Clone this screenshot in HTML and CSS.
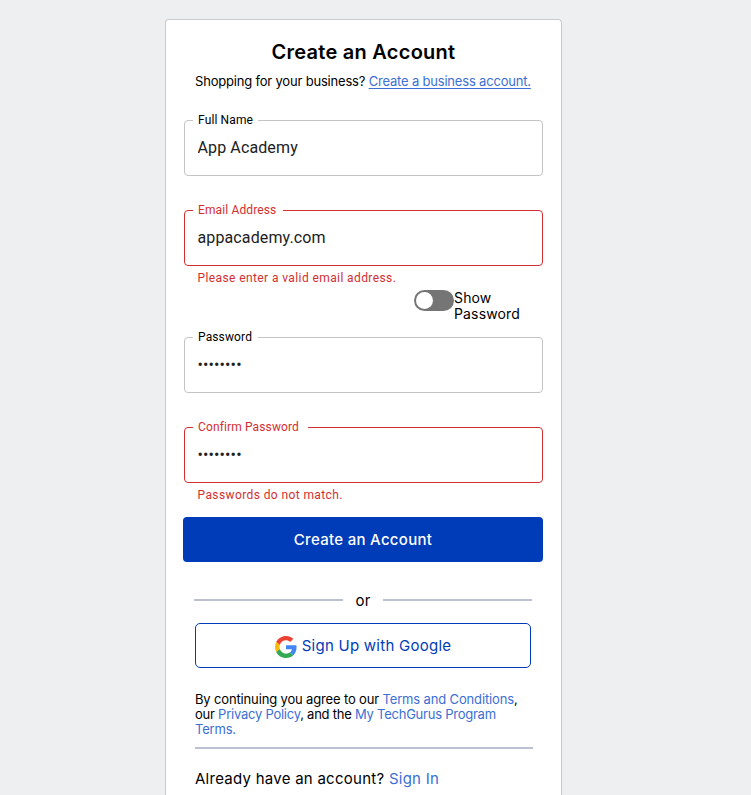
FILE: index.html
```html
<!DOCTYPE html>
<html lang="en">
<head>
<meta charset="utf-8">
<title>Create an Account</title>
<link rel="stylesheet" href="styles.css">
</head>
<body>
<main class="card">
  <h1 class="title"><span>Create an Account</span></h1>
  <p class="business"><span>Shopping for your business?</span> <a class="underlined" href="#">Create a business account.</a></p>
  <form>
    <fieldset class="field name">
      <legend>Full Name</legend>
      <input class="name-input" type="text" value="App Academy" aria-label="Full Name">
    </fieldset>
    <fieldset class="field email invalid">
      <legend>Email Address</legend>
      <input class="email-input" type="text" value="appacademy.com" aria-label="Email Address">
    </fieldset>
    <p class="error">Please enter a valid email address.</p>
    <div class="show-row">
      <span class="toggle"><span class="knob"></span></span>
      <span class="show-label">Show<br>Password</span>
    </div>
    <fieldset class="field password">
      <legend>Password</legend>
      <div class="secret">••••••••</div>
    </fieldset>
    <fieldset class="field confirm invalid">
      <legend>Confirm Password</legend>
      <div class="secret">••••••••</div>
    </fieldset>
    <p class="error">Passwords do not match.</p>
    <button class="submit" type="button">Create an Account</button>
  </form>
  <div class="divider"><span class="or">or</span></div>
  <button class="google" type="button">
    <svg class="logo" viewBox="0 0 48 48" aria-hidden="true">
      <path fill="#ea4335" d="M24 9.5c3.54 0 6.71 1.22 9.21 3.6l6.85-6.85C35.9 2.38 30.47 0 24 0 14.62 0 6.51 5.38 2.56 13.22l7.98 6.19C12.43 13.72 17.74 9.5 24 9.5z"/>
      <path fill="#4285f4" d="M46.98 24.55c0-1.57-.15-3.09-.38-4.55H24v9.02h12.94c-.58 2.96-2.26 5.48-4.78 7.18l7.73 6c4.51-4.18 7.09-10.36 7.09-17.65z"/>
      <path fill="#fbbc05" d="M10.53 28.59A14.5 14.5 0 0 1 9.77 24c0-1.6.27-3.14.76-4.59l-7.98-6.19A24 24 0 0 0 0 24c0 3.88.92 7.54 2.56 10.78z"/>
      <path fill="#34a853" d="M24 48c6.48 0 11.93-2.13 15.89-5.81l-7.73-6c-2.15 1.45-4.92 2.3-8.16 2.3-6.26 0-11.57-4.22-13.47-9.91l-7.98 6.19C6.51 42.62 14.62 48 24 48z"/>
    </svg>
    <span>Sign Up with Google</span>
  </button>
  <p class="terms"><span class="agree">By continuing you agree to our <a href="#">Terms and Conditions</a>,</span><br><span class="policy">our <a href="#">Privacy Policy</a>, and the <a href="#">My TechGurus Program</a></span><br><a href="#">Terms.</a></p>
  <hr class="rule">
  <p class="signin"><span>Already have an account?</span> <a href="#">Sign In</a></p>
</main>
</body>
</html>
```
FILE: styles.css
```css
* { box-sizing: border-box; }
body {
  display: flow-root;
  margin: 0;
  height: 795px;
  background: #eeeff1;
  color: #000;
  font-family: Inter, "Liberation Sans", sans-serif;
}
h1, p { margin: 0; }
a { color: #3b6fd4; text-decoration: none; }
.card {
  width: 397px;
  height: 776px;
  margin: 19px 0 0 165px;
  padding: 20px 18px 0;
  background: #fff;
  border: 1px solid #c8cacc;
  border-bottom: 0;
  border-radius: 4px 4px 0 0;
}
.title {
  text-align: center;
  font-size: 20px;
  line-height: 24px;
  font-weight: 600;
  letter-spacing: 0.25px;
}
.business {
  margin: 9px 0 0 11px;
  font-size: 13px;
  line-height: 16px;
  letter-spacing: -0.19px;
  white-space: nowrap;
}
.underlined { text-decoration: underline; text-underline-offset: 2px; }
.field {
  width: 359px;
  height: 63px;
  min-width: 0;
  margin: 27px 0 0;
  padding: 0 13px 0 8px;
  border: 1px solid #c4c4c4;
  border-radius: 4px;
  font-family: Roboto, sans-serif;
}
.field.name { margin-top: 24px; }
.field legend {
  width: 65px;
  height: 15px;
  padding: 0 0 0 5px;
  font-size: 12px;
  line-height: 14px;
  letter-spacing: 0.13px;
  white-space: nowrap;
}
.field.email legend { width: 90px; }
.field.confirm legend { width: 115px; }
.field.password { margin-top: 8px; }
.field.invalid { border-color: #d32f2f; }
.invalid legend, .error { color: #d32f2f; }
.field input {
  display: block;
  width: 330px;
  height: 24px;
  margin: 8px 0 0 4.5px;
  padding: 0;
  border: 0;
  outline: 0;
  background: none;
  color: #212121;
  font: 16px/24px Roboto, sans-serif;
  letter-spacing: 0.12px;
}
.secret {
  margin: 8px 0 0 4.5px;
  font: 16px/24px Roboto, sans-serif;
  letter-spacing: 0.12px;
  color: #212121;
}
.error {
  margin: 4px 0 0 13.5px;
  font: 12px/16px Roboto, sans-serif;
  letter-spacing: 0.4px;
}
.show-row { display: flex; height: 32px; margin: 4px 0 0 230px; }
.toggle {
  width: 40px;
  height: 21px;
  padding: 2px;
  border-radius: 11px;
  background: #757575;
}
.knob { display: block; width: 17px; height: 17px; border-radius: 50%; background: #fff; }
.show-label { font-size: 14px; line-height: 16px; letter-spacing: 0.15px; }
.submit {
  display: block;
  width: 360px;
  height: 45px;
  margin: 14px 0 0 -1px;
  border: 0;
  border-radius: 4px;
  background: #003cb8;
  color: #fff;
  font: 500 15px Inter, sans-serif;
  letter-spacing: 0.3px;
}
.divider {
  display: flex;
  align-items: center;
  height: 20px;
  margin: 29px 11px 0 10px;
}
.divider::before, .divider::after {
  content: "";
  flex: 1;
  height: 2px;
  background: #bbc1d1;
  margin-bottom: 2px;
}
.or { width: 40px; text-align: center; font-size: 15px; line-height: 20px; letter-spacing: 0.3px; }
.google {
  display: flex;
  align-items: center;
  justify-content: center;
  gap: 5px;
  width: 336px;
  height: 45px;
  margin: 12px 0 0 11px;
  border: 1px solid #003cb8;
  border-radius: 5px;
  background: #fff;
  color: #003cb8;
  font: 15px Inter, sans-serif;
  letter-spacing: 0.26px;
}
.logo { width: 22px; height: 22px; margin-top: 2px; }
.terms {
  margin: 24px 0 0 11px;
  font-size: 13px;
  line-height: 15px;
  letter-spacing: -0.2px;
  white-space: nowrap;
}
.agree { letter-spacing: -0.15px; }
.policy { letter-spacing: -0.24px; }
.rule { height: 2px; width: 338px; margin: 10px 0 0 11px; border: 0; background: #bbc1d1; }
.signin { margin: 20px 0 0 11px; font-size: 15px; line-height: 20px; letter-spacing: 0.26px; }
```
